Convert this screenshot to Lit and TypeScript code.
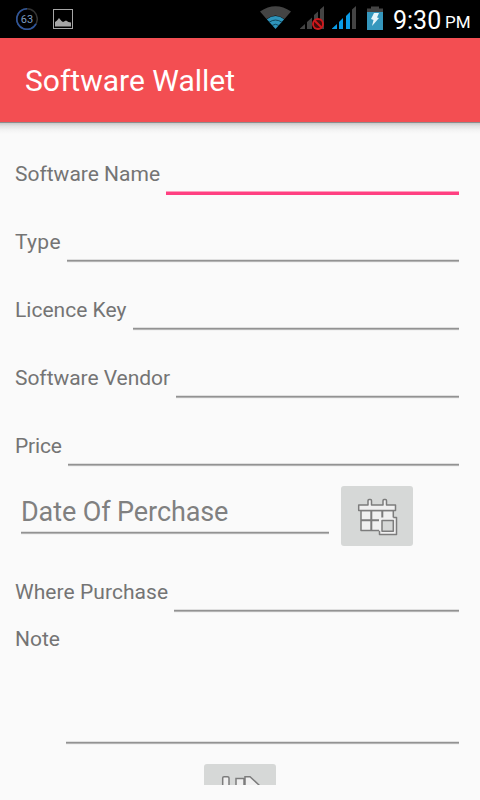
import { LitElement, html, css } from "lit";
import { customElement, property } from "lit/decorators.js";

@customElement("status-bar")
class StatusBar extends LitElement {
  static styles = css`
    :host { display: block; height: 38px; background: #000; }
    .bar { display: flex; height: 38px; align-items: center; color: #fff; font-family: Roboto, sans-serif; }
    svg { display: block; flex: none; }
    .ring { margin-left: 15px; }
    .pic { margin-left: 15px; }
    .wifi { margin-left: auto; }
    .sig { margin-left: 9px; }
    .sig2 { margin-left: 8px; }
    .bat { margin-left: 11px; }
    .time { width: 48px; margin-left: 10px; font-size: 25px; line-height: 38px; white-space: nowrap; padding-top: 2px; box-sizing: border-box; height: 38px; }
    .pm { width: 35px; margin-left: 4px; font-size: 17px; line-height: 38px; padding-top: 3px; box-sizing: border-box; height: 38px; }
    .num { font: 11px Roboto, sans-serif; fill: #7d9cc0; }
  `;
  render() {
    return html`<div class="bar">
      <svg class="ring" width="23" height="38" viewBox="0 0 23 38">
        <circle cx="12" cy="19" r="10.3" fill="none" stroke="#333" stroke-width="1.5" />
        <path d="M12 8.7A10.3 10.3 0 1 0 21 24" fill="none" stroke="#2e559b" stroke-width="1.6" />
        <text class="num" x="12" y="23" text-anchor="middle">63</text>
      </svg>
      <svg class="pic" width="20" height="38" viewBox="0 0 20 38">
        <rect x=".5" y="9.5" width="19" height="19" fill="none" stroke="#a6a6a6" />
        <path d="M2 26.500V22L4 20.500L6 18L8.500 21L10 22L13 20.500L15.500 22L18 22.500V26.500Z" fill="#a6a6a6" />
      </svg>
      <svg class="wifi" width="31" height="38" viewBox="0 0 31 38">
        <path d="M0 11.500Q15.500 1 31 11.500L24.500 19Q15.500 12 6.500 19Z" fill="#444" />
        <path d="M6.800 19.200Q15.500 13 24.200 19.200L15.500 29Z" fill="#2e93ba" />
        <path d="M9 22.300Q15.500 17.800 22 22.300M12 25.500Q15.500 23 19 25.500" stroke="#0d3c4e" fill="none" stroke-width=".9" />
      </svg>
      <svg class="sig" width="24" height="38" viewBox="0 0 24 38">
        <path d="M0 29V28.500L5 24V29ZM7 29V22L12 17.500V29ZM14 29V15L18 11.500V29ZM20 29V9.500L24 6V29Z" fill="#444" />
        <circle cx="18" cy="24" r="5" fill="#400c0c" stroke="#d0181c" stroke-width="1.900" />
        <path d="M14.500 20.500L21.500 27.500" stroke="#d0181c" stroke-width="2" />
      </svg>
      <svg class="sig2" width="24" height="38" viewBox="0 0 24 38">
        <path d="M0 29V28.500L5 24V29ZM7 29V22L11 18V29ZM14 29V16L18 12V29Z" fill="#0a9be6" />
        <path d="M20 29V9.500L24 6V29Z" fill="#444" />
      </svg>
      <svg class="bat" width="16" height="38" viewBox="0 0 16 38">
        <path d="M0 8.500H4V6.500H12V8.500H16V12H0Z" fill="#444" />
        <path d="M0 12H16V30H0Z" fill="#3597bd" />
        <path d="M7 13L12 13L10 17.500L12 18L5 26L6.500 20L4 19Z" fill="#e6f5fb" />
      </svg>
      <span class="time">9:30</span><span class="pm">PM</span>
    </div>`;
  }
}

@customElement("form-row")
class FormRow extends LitElement {
  static styles = css`
    :host { display: flex; height: 68px; padding: 0 21px 0 15px; box-sizing: border-box; align-items: flex-start; }
    .label { flex: none; margin-top: 21px; font: 21px/26px Roboto, sans-serif; color: #747474; white-space: nowrap; }
    .field { flex: 1; height: 55px; box-sizing: border-box; display: flex; flex-direction: column; justify-content: flex-end; }
    .line { height: 4px; background: linear-gradient(#e0e0e0 0 1px, #929292 1px 2px, #b4b4b4 2px 3px, #f2f2f2 3px); }
    .line.on { background: linear-gradient(#ff9dbd 0 1px, #ff4081 1px 4px); }
    :host([multi]) { height: 138px; }
    :host([multi]) .label { margin-top: 0; }
    :host([multi]) .field { height: 119px; }
  `;
  @property() label = "";
  @property({ type: Number }) start = 0;
  @property({ type: Number }) spacing = 0;
  @property({ type: Boolean }) active = false;
  @property({ type: Boolean, reflect: true }) multi = false;
  render() {
    return html`<div class="label" style="width:${this.start - 15}px;letter-spacing:${this.spacing}px">${this.label}</div>
      <div class="field"><div class="line ${this.active ? "on" : ""}"></div></div>`;
  }
}

@customElement("app-root")
class AppRoot extends LitElement {
  static styles = css`
    :host { display: block; height: 800px; overflow: hidden; background: #fafafa; font-family: Roboto, sans-serif; }
    .title { height: 84px; box-sizing: border-box; padding: 0 25px; background: #f34e52; color: #fff; font-size: 30px; line-height: 85px; white-space: nowrap; }
    .shadow { height: 18px; background: linear-gradient(#8c8c8c 0 1px, #c8c8c8 1px, #e2e2e2 4px, #f3f3f3 8px, #fafafa 12px); }
    .form { height: 645px; overflow: hidden; }
    .date { display: flex; height: 72px; margin-bottom: 6px; padding-left: 21px; }
    .input { width: 308px; height: 55px; box-sizing: border-box; padding-top: 15px; display: flex; flex-direction: column; justify-content: space-between; font-size: 27px; line-height: 34px; letter-spacing: -.1px; color: #808080; white-space: nowrap; }
    .rule { height: 4px; background: linear-gradient(#e0e0e0 0 1px, #929292 1px 2px, #b4b4b4 2px 3px, #f2f2f2 3px); }
    .btn { width: 72px; height: 60px; border-radius: 3px; background: #d6d8d7; margin: 6px 0 0 12px; }
    .btn svg { display: block; }
    .save { margin: 0 0 0 204px; }
  `;
  render() {
    return html`<status-bar></status-bar>
      <div class="title">Software Wallet</div>
      <div class="shadow"></div>
      <div class="form">
        <form-row label="Software Name" start="166" active></form-row>
        <form-row label="Type" start="67" spacing=".3"></form-row>
        <form-row label="Licence Key" start="133"></form-row>
        <form-row label="Software Vendor" start="176" spacing="-.04"></form-row>
        <form-row label="Price" start="68" spacing="-.15"></form-row>
        <div class="date">
          <div class="input"><span>Date Of Perchase</span><div class="rule"></div></div>
          <div class="btn"><svg width="72" height="60" viewBox="0 0 72 60">
            <g fill="#f0f0f0" stroke="#7c7c7c" stroke-width="1.500" stroke-linejoin="round">
              <path d="M20 24.500H52.300V44.500H20Z" />
              <path d="M30.300 24.500V44.500M41.300 24.500V34M20 34.200H41" stroke-width="2" />
              <path d="M17.700 19H27V14.700Q27 13.500 28 13.500H29.500Q30.500 13.500 30.500 14.700V19H42V14.700Q42 13.500 43 13.500H44.500Q45.500 13.500 45.500 14.700V19H54.500V24.500H17.700Z" />
              <path d="M38 31.500H55.500V48.500H38Z" stroke="none" />
              <path d="M52.300 31.500H55.500V48.500H38.500V44.800" fill="none" />
              <path d="M41 34.500H52.300V45.300H41Z" fill="#d6d8d7" />
            </g></svg></div>
        </div>
        <form-row label="Where Purchase" start="174" spacing=".06"></form-row>
        <form-row label="Note" start="66" multi></form-row>
        <div class="btn save"><svg width="72" height="60" viewBox="0 0 72 60">
          <g fill="#f0f0f0" stroke="#7c7c7c" stroke-width="1.500">
            <path d="M18.700 46V14Q18.700 12.700 20 12.700H23.500Q25 12.700 25 14V46ZM32 46V14.500H40V46ZM41 46V12.700H46L55 21V46Z" />
          </g></svg></div>
      </div>`;
  }
}
